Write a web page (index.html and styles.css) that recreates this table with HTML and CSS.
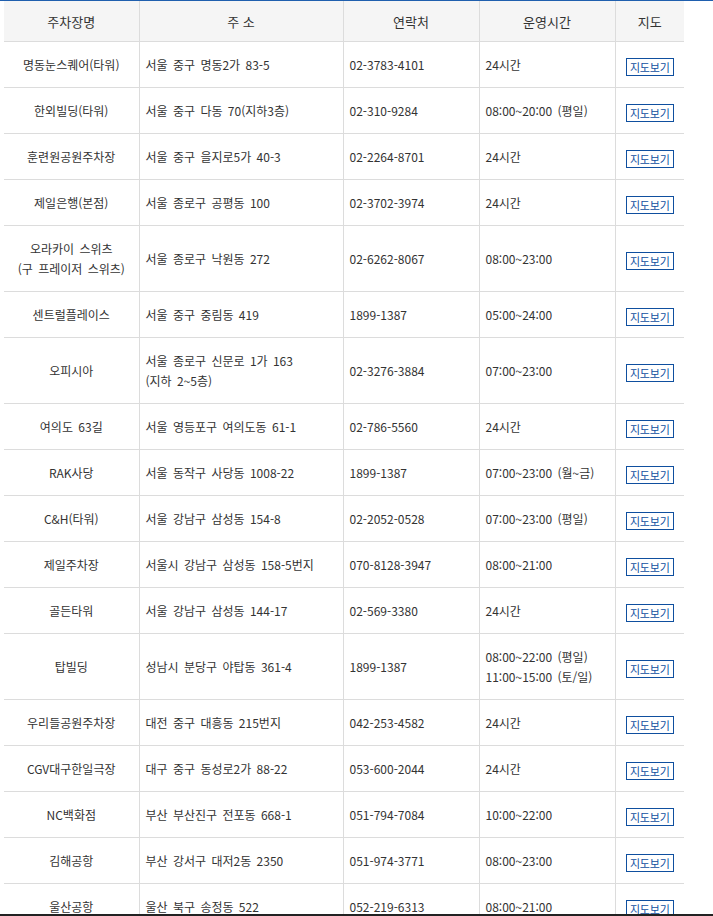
FILE: index.html
```html
<!DOCTYPE html>
<html lang="ko">
<head>
<meta charset="utf-8">
<title>주차장 안내</title>
<link rel="stylesheet" href="styles.css">
</head>
<body>
<div class="topline"></div>
<table class="park">
  <colgroup>
    <col class="c1"><col class="c2"><col class="c3"><col class="c4"><col class="c5">
  </colgroup>
  <thead>
    <tr><th>주차장명</th><th>주 소</th><th>연락처</th><th>운영시간</th><th>지도</th></tr>
  </thead>
  <tbody>
    <tr><td class="name">명동눈스퀘어(타워)</td><td>서울 중구 명동2가 83-5</td><td>02-3783-4101</td><td>24시간</td><td class="map"><a class="btn">지도보기</a></td></tr>
    <tr><td class="name">한외빌딩(타워)</td><td>서울 중구 다동 70(지하3층)</td><td>02-310-9284</td><td>08:00~20:00 (평일)</td><td class="map"><a class="btn">지도보기</a></td></tr>
    <tr><td class="name">훈련원공원주차장</td><td>서울 중구 을지로5가 40-3</td><td>02-2264-8701</td><td>24시간</td><td class="map"><a class="btn">지도보기</a></td></tr>
    <tr><td class="name">제일은행(본점)</td><td>서울 종로구 공평동 100</td><td>02-3702-3974</td><td>24시간</td><td class="map"><a class="btn">지도보기</a></td></tr>
    <tr><td class="name">오라카이 스위츠<br>(구 프레이저 스위츠)</td><td>서울 종로구 낙원동 272</td><td>02-6262-8067</td><td>08:00~23:00</td><td class="map"><a class="btn">지도보기</a></td></tr>
    <tr><td class="name">센트럴플레이스</td><td>서울 중구 중림동 419</td><td>1899-1387</td><td>05:00~24:00</td><td class="map"><a class="btn">지도보기</a></td></tr>
    <tr><td class="name">오피시아</td><td>서울 종로구 신문로 1가 163<br>(지하 2~5층)</td><td>02-3276-3884</td><td>07:00~23:00</td><td class="map"><a class="btn">지도보기</a></td></tr>
    <tr><td class="name">여의도 63길</td><td>서울 영등포구 여의도동 61-1</td><td>02-786-5560</td><td>24시간</td><td class="map"><a class="btn">지도보기</a></td></tr>
    <tr><td class="name">RAK사당</td><td>서울 동작구 사당동 1008-22</td><td>1899-1387</td><td>07:00~23:00 (월~금)</td><td class="map"><a class="btn">지도보기</a></td></tr>
    <tr><td class="name">C&amp;H(타워)</td><td>서울 강남구 삼성동 154-8</td><td>02-2052-0528</td><td>07:00~23:00 (평일)</td><td class="map"><a class="btn">지도보기</a></td></tr>
    <tr><td class="name">제일주차장</td><td>서울시 강남구 삼성동 158-5번지</td><td>070-8128-3947</td><td>08:00~21:00</td><td class="map"><a class="btn">지도보기</a></td></tr>
    <tr><td class="name">골든타워</td><td>서울 강남구 삼성동 144-17</td><td>02-569-3380</td><td>24시간</td><td class="map"><a class="btn">지도보기</a></td></tr>
    <tr><td class="name">탑빌딩</td><td>성남시 분당구 야탑동 361-4</td><td>1899-1387</td><td>08:00~22:00 (평일)<br>11:00~15:00 (토/일)</td><td class="map"><a class="btn">지도보기</a></td></tr>
    <tr><td class="name">우리들공원주차장</td><td>대전 중구 대흥동 215번지</td><td>042-253-4582</td><td>24시간</td><td class="map"><a class="btn">지도보기</a></td></tr>
    <tr><td class="name">CGV대구한일극장</td><td>대구 중구 동성로2가 88-22</td><td>053-600-2044</td><td>24시간</td><td class="map"><a class="btn">지도보기</a></td></tr>
    <tr><td class="name">NC백화점</td><td>부산 부산진구 전포동 668-1</td><td>051-794-7084</td><td>10:00~22:00</td><td class="map"><a class="btn">지도보기</a></td></tr>
    <tr><td class="name">김해공항</td><td>부산 강서구 대저2동 2350</td><td>051-974-3771</td><td>08:00~23:00</td><td class="map"><a class="btn">지도보기</a></td></tr>
    <tr><td class="name">울산공항</td><td>울산 북구 송정동 522</td><td>052-219-6313</td><td>08:00~21:00</td><td class="map"><a class="btn">지도보기</a></td></tr>
  </tbody>
</table>
<div class="bottomline"></div>
</body>
</html>
```

FILE: styles.css
```css
html, body {
  margin: 0;
  padding: 0;
  background: #fff;
}
body {
  font-family: "Noto Sans CJK KR", "Liberation Sans", sans-serif;
  font-size: 12px;
  color: #333;
  overflow: hidden;
}
.topline {
  height: 1px;
  background: #1f5fae;
}
.park {
  margin-left: 4px;
  width: 680px;
  border-collapse: collapse;
  table-layout: fixed;
}
.c1 { width: 135px; }
.c2 { width: 204px; }
.c3 { width: 136px; }
.c4 { width: 136px; }
.c5 { width: 69px; }
.park th {
  background: #f5f5f5;
  font-weight: normal;
  font-size: 13px;
  color: #333;
  height: 40px;
  padding: 0;
  text-align: center;
  border-left: 1px solid #dcdcdc;
  border-bottom: 1px solid #dcdcdc;
}
.park td {
  padding: 12.5px 6px;
  line-height: 20px;
  text-align: left;
  vertical-align: middle;
  word-spacing: 2px;
  border-left: 1px solid #dcdcdc;
  border-bottom: 1px solid #dcdcdc;
  white-space: nowrap;
}
.park th:first-child,
.park td:first-child {
  border-left: none;
}
.park td.name {
  text-align: center;
}
.park td.map {
  text-align: center;
  padding: 15px 0 10px;
  line-height: 18px;
}
.btn {
  display: inline-block;
  box-sizing: border-box;
  width: 48px;
  height: 18px;
  line-height: 16px;
  border: 1px solid #0f4f9f;
  color: #0f4f9f;
  font-size: 11px;
  letter-spacing: -0.2px;
  text-decoration: none;
  vertical-align: top;
  text-align: center;
  word-spacing: 0;
}
.bottomline {
  position: fixed;
  left: 0;
  right: 0;
  bottom: 0;
  height: 2px;
  background: #222;
}
```
